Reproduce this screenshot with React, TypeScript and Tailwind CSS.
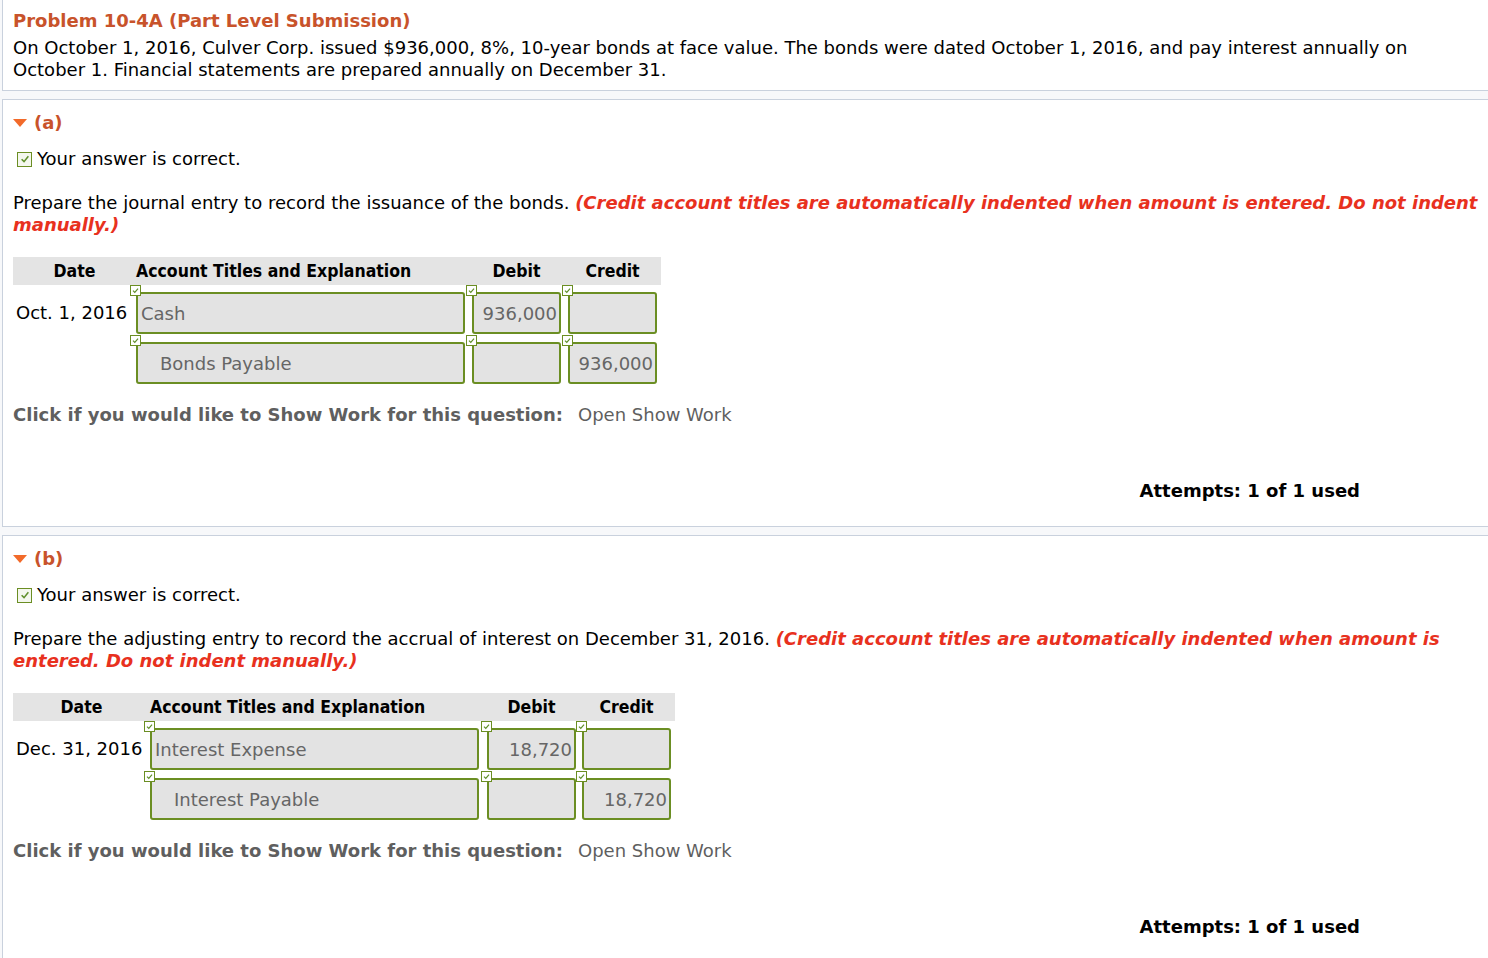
import React from "react";

const font = "font-['DejaVu_Sans',Verdana,sans-serif]";

function Tick({ className = "" }: { className?: string }) {
  return (
    <svg viewBox="0 0 10 10" className={className}>
      <path d="M2.2 5.2 L4.2 7.2 L7.8 2.8" fill="none" stroke="#5f8f2a" strokeWidth="1.3" />
    </svg>
  );
}

function Cell({ value, width, align = "left", indent = false }: { value: string; width: number; align?: "left" | "right"; indent?: boolean }) {
  return (
    <div className="relative shrink-0" style={{ width }}>
      <span className="absolute -left-[6px] -top-[7px] z-10 flex h-[11px] w-[11px] items-center justify-center border border-[#6b8e23] bg-white">
        <Tick className="h-[9px] w-[9px]" />
      </span>
      <div
        className={`flex h-[42px] items-center rounded-[3px] border-2 border-[#6b8e23] bg-[#e3e3e3] text-[18px] text-[#666] ${
          align === "right" ? "justify-end pr-[2px]" : indent ? "pl-[22px]" : "pl-[3px]"
        }`}
      >
        {value}
      </div>
    </div>
  );
}

type Row = { date?: string; account: string; debit: string; credit: string; indent?: boolean };

function Journal({ dateW, gapA, gapB, rows }: { dateW: number; gapA: number; gapB: number; rows: Row[] }) {
  const acctW = 329;
  const amtW = 89;
  return (
    <div className="mt-[21px] w-fit">
      <div className="flex h-[28px] items-center bg-[#e4e4e4] pr-[4px] font-['DejaVu_Sans_Condensed','DejaVu_Sans',sans-serif] text-[17.5px] font-bold text-black">
        <div className="text-center" style={{ width: dateW }}>Date</div>
        <div style={{ width: acctW }}>Account Titles and Explanation</div>
        <div className="text-center" style={{ width: amtW, marginLeft: gapA }}>Debit</div>
        <div className="text-center" style={{ width: amtW, marginLeft: gapB }}>Credit</div>
      </div>
      <div className="mt-[7px] flex flex-col gap-[8px]">
        {rows.map((r, i) => (
          <div key={i} className="flex items-start">
            <div className="shrink-0 whitespace-nowrap pl-[3px] pt-[7px] text-[18px] text-black" style={{ width: dateW }}>
              {r.date ?? ""}
            </div>
            <Cell value={r.account} width={acctW} indent={r.indent} />
            <div style={{ width: gapA }} className="shrink-0" />
            <Cell value={r.debit} width={amtW} align="right" />
            <div style={{ width: gapB }} className="shrink-0" />
            <Cell value={r.credit} width={amtW} align="right" />
          </div>
        ))}
      </div>
    </div>
  );
}

function Part({ label, prompt, table }: { label: string; prompt: React.ReactNode; table: React.ReactNode }) {
  return (
    <section className="ml-[2px] border-y border-l border-[#c9d1dd] bg-white pl-[10px] pt-[11px]">
      <div className="flex items-center gap-[7px] text-[18px] font-bold leading-[24px] text-[#c8532b]">
        <svg viewBox="0 0 14 8" className="h-[8px] w-[14px]">
          <polygon points="0,0 14,0 7,8" fill="#f26a2a" />
        </svg>
        <span>{label}</span>
      </div>
      <div className="mt-[13px] flex items-center gap-[5px] text-[18px] leading-[22px] text-black">
        <span className="ml-[4px] flex h-[15px] w-[15px] items-center justify-center border border-[#6b8e23] bg-[#f4f7ee]">
          <Tick className="h-[12px] w-[12px]" />
        </span>
        <span>Your answer is correct.</span>
      </div>
      <p className="mt-[22px] pr-[10px] text-[18px] leading-[22px] text-black">{prompt}</p>
      {table}
      <div className="mt-[20px] flex text-[18px] leading-[22px]">
        <span className="font-bold text-[#5f5f5f]">Click if you would like to Show Work for this question:</span>
        <span className="ml-[15px] text-[#5f5f5f]">Open Show Work</span>
      </div>
      <div className="mt-[54px] pb-[24px] pr-[128px] text-right text-[18px] font-bold leading-[22px] text-black">
        Attempts: 1 of 1 used
      </div>
    </section>
  );
}

export default function App() {
  return (
    <div className={`min-h-[958px] w-[1488px] bg-[#f7f8fa] ${font}`}>
      <div className="ml-[2px] border-b border-l border-[#c9d1dd] bg-white pb-[9px] pl-[10px] pt-[10px]">
        <h1 className="text-[18px] font-bold leading-[22px] text-[#c8532b]">Problem 10-4A (Part Level Submission)</h1>
        <p className="mt-[5px] pr-[40px] text-[18px] leading-[22px] text-black">
          On October 1, 2016, Culver Corp. issued $936,000, 8%, 10-year bonds at face value. The bonds were dated October 1, 2016, and pay interest annually on October 1. Financial statements are prepared annually on December 31.
        </p>
      </div>
      <div className="h-[8px]" />
      <Part
        label="(a)"
        prompt={
          <>
            Prepare the journal entry to record the issuance of the bonds.{" "}
            <em className="font-bold text-[#e8311e]">
              (Credit account titles are automatically indented when amount is entered. Do not indent manually.)
            </em>
          </>
        }
        table={
          <Journal
            dateW={123}
            gapA={7}
            gapB={7}
            rows={[
              { date: "Oct. 1, 2016", account: "Cash", debit: "936,000", credit: "" },
              { account: "Bonds Payable", debit: "", credit: "936,000", indent: true },
            ]}
          />
        }
      />
      <div className="h-[8px]" />
      <Part
        label="(b)"
        prompt={
          <>
            Prepare the adjusting entry to record the accrual of interest on December 31, 2016.{" "}
            <em className="font-bold text-[#e8311e]">
              (Credit account titles are automatically indented when amount is entered. Do not indent manually.)
            </em>
          </>
        }
        table={
          <Journal
            dateW={137}
            gapA={8}
            gapB={6}
            rows={[
              { date: "Dec. 31, 2016", account: "Interest Expense", debit: "18,720", credit: "" },
              { account: "Interest Payable", debit: "", credit: "18,720", indent: true },
            ]}
          />
        }
      />
    </div>
  );
}
